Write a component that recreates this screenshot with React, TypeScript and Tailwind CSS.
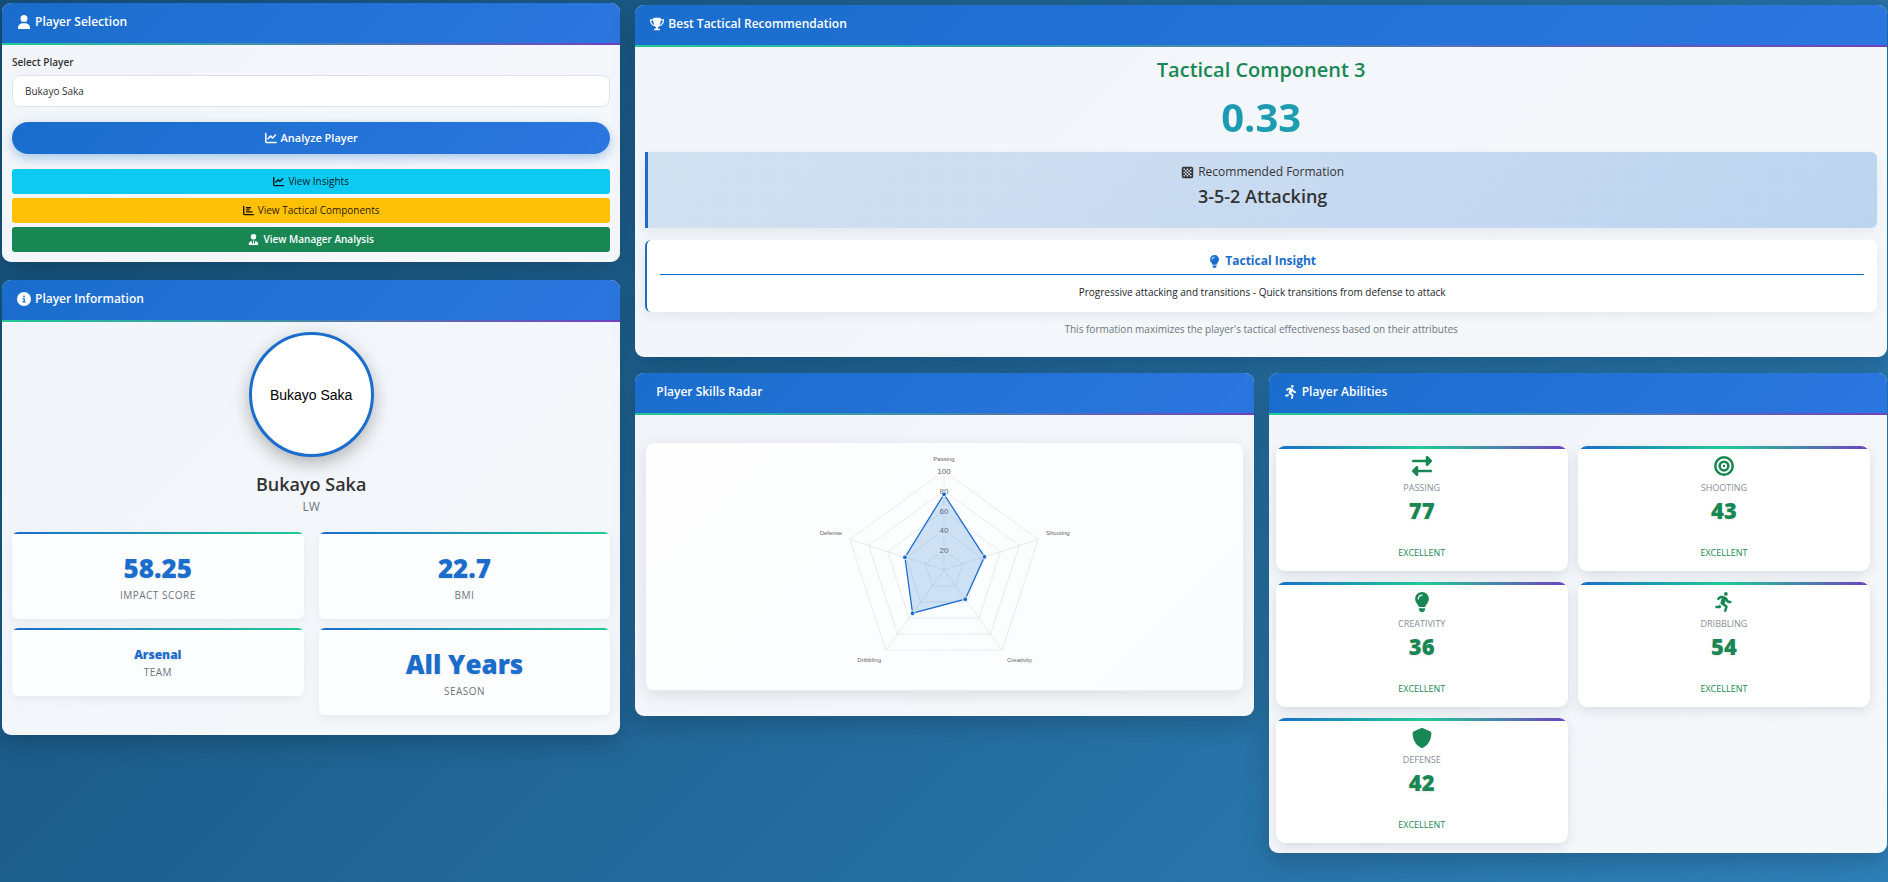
import type { ReactNode } from "react";
import type { IconType } from "react-icons";
import {
  FaBullseye,
  FaChartBar,
  FaChartLine,
  FaChessBoard,
  FaCircleInfo,
  FaLightbulb,
  FaPersonRunning,
  FaRightLeft,
  FaShield,
  FaTrophy,
  FaUser,
  FaUserTie,
} from "react-icons/fa6";

type CardProps = { title: string; icon?: ReactNode; children: ReactNode };

function Card({ title, icon, children }: CardProps) {
  return (
    <section className="overflow-hidden rounded-[9px] bg-linear-135/srgb from-[#f1f5f9] to-[#f5f8fb] shadow-[0_8px_24px_rgba(0,0,0,0.2)]">
      <h2 className="flex h-10 items-center gap-1 bg-linear-135/srgb from-[#1a6dcc] to-[#2b76df] px-[15px] pb-[3px] text-[12px] leading-[18px] font-semibold text-white">
        {icon ?? <span className="w-[2px]" />}
        {title}
      </h2>
      <div className="h-[2px] bg-linear-to-r/srgb from-[#20c997] to-[#6f42c1]" />
      {children}
    </section>
  );
}

const links = [
  { label: "View Insights", icon: FaChartLine, style: "bg-[#0dcaf0] text-black/90" },
  { label: "View Tactical Components", icon: FaChartBar, style: "bg-[#ffc107] text-black/90" },
  { label: "View Manager Analysis", icon: FaUserTie, style: "bg-[#198754] text-white font-semibold" },
];

function PlayerSelection() {
  return (
    <Card title="Player Selection" icon={<FaUser className="h-[14px] w-auto" />}>
      <div className="flex flex-col p-[10px]">
        <label htmlFor="player" className="mb-[5px] text-[10px] leading-[15px] font-semibold text-[#333]">
          Select Player
        </label>
        <select
          id="player"
          className="h-8 appearance-none rounded-[8px] border border-[#dee2e6] bg-white px-3 text-[10px] font-medium text-[#333]"
        >
          <option>Bukayo Saka</option>
        </select>
        <button
          type="button"
          className="mt-[15px] flex h-8 items-center justify-center gap-1 rounded-full bg-linear-135/srgb from-[#1a6dcc] to-[#2b76df] text-[11px] font-semibold text-white shadow-[0_4px_11px_rgba(26,109,204,0.35)]"
        >
          <FaChartLine className="size-3" />
          Analyze Player
        </button>
        <div className="mt-[15px] flex flex-col gap-1">
          {links.map(({ label, icon: Icon, style }) => (
            <a
              key={label}
              href="#"
              className={`flex h-[25px] items-center justify-center gap-1 rounded-[3px] text-[10px] ${style}`}
            >
              <Icon className="h-[11px] w-auto" />
              {label}
            </a>
          ))}
        </div>
      </div>
    </Card>
  );
}

function Stat({ value, label, small }: { value: string; label: string; small?: boolean }) {
  return (
    <div className="overflow-hidden rounded-[6px] bg-[#fcfdff] pb-4 text-center shadow-[0_3px_11px_rgba(0,0,0,0.06)]">
      <div className="mb-[14px] h-[2px] bg-linear-to-r/srgb from-[#1a6dcc] to-[#20c997]" />
      <div
        className={`font-extrabold text-[#1a6dcc] [text-shadow:0_1px_2px_rgba(0,0,0,0.1)] ${
          small ? "text-[12px] leading-[21px]" : "text-[26px] leading-[40px]"
        }`}
      >
        {value}
      </div>
      <div className="text-[10px] leading-[15px] font-medium tracking-wider text-[#6c757d] uppercase">{label}</div>
    </div>
  );
}

function PlayerInformation() {
  return (
    <Card title="Player Information" icon={<FaCircleInfo className="size-[14px]" />}>
      <div className="flex flex-col px-[10px] pt-[10px] pb-5 text-center">
        <div className="flex size-[125px] items-center justify-center self-center rounded-full border-3 border-[#1a6dcc] bg-white pt-[2px] font-['Liberation_Sans',sans-serif] text-[14px] text-black shadow-[0_6px_18px_rgba(0,0,0,0.28)]">
          Bukayo Saka
        </div>
        <h3 className="mt-[15px] text-[18px] leading-6 font-semibold text-[#333]">Bukayo Saka</h3>
        <p className="mt-[2px] text-[12px] leading-[18px] text-[#6c757d]">LW</p>
        <div className="mt-4 grid grid-cols-2 items-start gap-x-[15px] gap-y-[9px]">
          <Stat value="58.25" label="Impact Score" />
          <Stat value="22.7" label="BMI" />
          <Stat value="Arsenal" label="Team" small />
          <Stat value="All Years" label="Season" />
        </div>
      </div>
    </Card>
  );
}

function Recommendation() {
  return (
    <Card title="Best Tactical Recommendation" icon={<FaTrophy className="h-[14px] w-auto" />}>
      <div className="px-[10px] pt-2 pb-5 text-center">
        <h3 className="text-[20px] leading-[30px] font-semibold text-[#198754]">Tactical Component 3</h3>
        <p className="mt-[2px] bg-linear-135/srgb from-[#1a6dcc] to-[#20c997] bg-clip-text text-[40px] leading-[60px] font-bold text-transparent">
          0.33
        </p>
        <div className="mt-[5px] rounded-r-[6px] border-l-3 border-[#1a6dcc] bg-linear-135/srgb from-[#d2e1f0] via-[#c9dbf1] to-[#bcd4ef] text-[#333] shadow-[0_4px_12px_rgba(0,0,0,0.06)]">
          <div className="bg-[radial-gradient(rgba(26,109,204,0.06)_1px,transparent_1px)] bg-size-[12px_12px] pt-[10px] pb-5">
            <p className="flex items-center justify-center gap-1 text-[12px] leading-5 font-medium">
              <FaChessBoard className="h-[13px] w-auto" />
              Recommended Formation
            </p>
            <p className="mt-[2px] text-[18px] leading-6 font-semibold">3-5-2 Attacking</p>
          </div>
        </div>
        <div className="mt-3 rounded-[6px] border-l-2 border-[#1a6dcc] bg-white px-[13px] py-3 shadow-[0_4px_12px_rgba(0,0,0,0.06)]">
          <h4 className="flex items-center justify-center gap-1 border-b border-[#1a6dcc] pb-1 text-[12px] leading-[18px] font-bold text-[#1a6dcc]">
            <FaLightbulb className="h-[13px] w-auto" />
            Tactical Insight
          </h4>
          <p className="mt-[10px] text-[10px] leading-[15px] text-[#212529]">
            Progressive attacking and transitions - Quick transitions from defense to attack
          </p>
        </div>
        <p className="mt-[10px] text-[10px] leading-[15px] text-[#6c757d]">
          This formation maximizes the player's tactical effectiveness based on their attributes
        </p>
      </div>
    </Card>
  );
}

const CX = 130;
const CY = 120;
const RADIUS = 99;
const scores = [76.5, 43, 36.5, 54, 41.5];

function vertex(index: number, score: number) {
  const angle = (index * 2 * Math.PI) / 5 - Math.PI / 2;
  const r = (RADIUS * score) / 100;
  return { x: CX + r * Math.cos(angle), y: CY + r * Math.sin(angle) };
}

function polygon(values: number[]) {
  return values
    .map((score, i) => {
      const p = vertex(i, score);
      return `${p.x.toFixed(2)},${p.y.toFixed(2)}`;
    })
    .join(" ");
}

const rings = [20, 40, 60, 80, 100];

const axisLabels: { text: string; x: number; y: number; anchor: "start" | "middle" | "end" }[] = [
  { text: "Passing", x: 130, y: 11, anchor: "middle" },
  { text: "Shooting", x: 232, y: 85, anchor: "start" },
  { text: "Creativity", x: 193, y: 212, anchor: "start" },
  { text: "Dribbling", x: 67, y: 212, anchor: "end" },
  { text: "Defense", x: 28, y: 85, anchor: "end" },
];

function RadarChart() {
  return (
    <svg
      viewBox="0 0 260 222"
      className="h-[222px] w-[260px] font-['Liberation_Sans',sans-serif]"
      role="img"
      aria-label="Player skills"
    >
      <g fill="none" stroke="#000" strokeOpacity="0.08" strokeWidth="1">
        {rings.map((ring) => (
          <polygon key={ring} points={polygon([ring, ring, ring, ring, ring])} />
        ))}
        {scores.map((_, i) => {
          const p = vertex(i, 100);
          return <line key={i} x1={CX} y1={CY} x2={p.x} y2={p.y} />;
        })}
      </g>
      {rings.map((ring) => {
        const y = CY - (RADIUS * ring) / 100;
        const width = ring === 100 ? 17 : 12;
        return (
          <g key={ring}>
            <rect x={CX - width / 2} y={y - 5} width={width} height="10" fill="#fdfefe" fillOpacity="0.8" />
            <text x={CX} y={y + 3} textAnchor="middle" fontSize="8" fill="#666">
              {ring}
            </text>
          </g>
        );
      })}
      {axisLabels.map(({ text, x, y, anchor }) => (
        <text key={text} x={x} y={y} textAnchor={anchor} fontSize="6" fill="#666">
          {text}
        </text>
      ))}
      <polygon points={polygon(scores)} fill="#1a6dcc" fillOpacity="0.2" stroke="#1a6dcc" strokeWidth="1.3" />
      {scores.map((score, i) => {
        const p = vertex(i, score);
        return <circle key={i} cx={p.x} cy={p.y} r="2.4" fill="#1a6dcc" stroke="#fff" strokeWidth="0.9" />;
      })}
    </svg>
  );
}

function SkillsRadar() {
  return (
    <Card title="Player Skills Radar">
      <div className="px-[10px] pt-[27px] pb-[25px]">
        <div className="flex justify-center rounded-[9px] border border-[#eceef1] bg-linear-135/srgb from-[#fdfefd] to-[#fbfcff] pt-[7px] pb-[18px] shadow-[0_4px_15px_rgba(0,0,0,0.1)]">
          <RadarChart />
        </div>
      </div>
    </Card>
  );
}

const abilities: { label: string; value: number; icon: IconType }[] = [
  { label: "Passing", value: 77, icon: FaRightLeft },
  { label: "Shooting", value: 43, icon: FaBullseye },
  { label: "Creativity", value: 36, icon: FaLightbulb },
  { label: "Dribbling", value: 54, icon: FaPersonRunning },
  { label: "Defense", value: 42, icon: FaShield },
];

function PlayerAbilities() {
  return (
    <Card title="Player Abilities" icon={<FaPersonRunning className="h-[14px] w-auto" />}>
      <div className="grid grid-cols-2 gap-x-[10px] gap-y-[11px] pt-[31px] pr-[17px] pb-[10px] pl-[7px]">
        {abilities.map(({ label, value, icon: Icon }) => (
          <div
            key={label}
            className="flex flex-col items-center overflow-hidden rounded-[9px] bg-white pb-[11px] text-[#198754] shadow-[0_4px_12px_rgba(0,0,0,0.1)]"
          >
            <div className="mb-[7px] h-[3px] self-stretch bg-linear-to-r/srgb from-[#1a6dcc] via-[#20c997] to-[#6f42c1]" />
            <Icon className="size-5" />
            <div className="mt-[5px] text-[9px] leading-[14px] text-[#868e96] uppercase">{label}</div>
            <div className="mt-px text-[22px] leading-7 font-extrabold [text-shadow:0_1px_2px_rgba(0,0,0,0.1)]">
              {value}
            </div>
            <div className="mt-[22px] text-[9px] leading-[14px] font-medium uppercase">Excellent</div>
          </div>
        ))}
      </div>
    </Card>
  );
}

export default function App() {
  return (
    <main className="grid min-h-screen grid-cols-3 items-start gap-[15px] bg-linear-135/srgb from-[#154f78] to-[#2e80b9] pr-px pb-[29px] pl-[2px] font-['Open_Sans','Noto_Sans',sans-serif]">
      <div className="flex flex-col gap-[18px] pt-[3px]">
        <PlayerSelection />
        <PlayerInformation />
      </div>
      <div className="col-span-2 flex flex-col gap-4 pt-[5px]">
        <Recommendation />
        <div className="grid grid-cols-2 items-start gap-[15px]">
          <SkillsRadar />
          <PlayerAbilities />
        </div>
      </div>
    </main>
  );
}
